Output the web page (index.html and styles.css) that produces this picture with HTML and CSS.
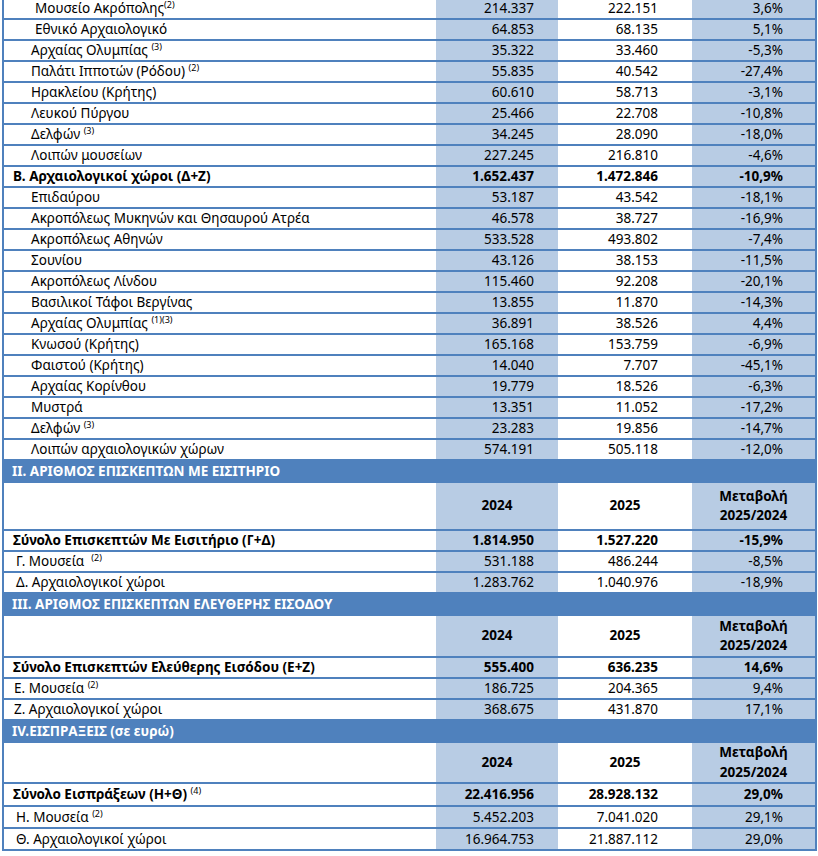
FILE: index.html
```html
<!DOCTYPE html>
<html lang="el">
<head>
<meta charset="utf-8">
<title>Επισκέπτες</title>
<link rel="stylesheet" href="styles.css">
</head>
<body>
<table class="tbl">
<colgroup><col class="c1"><col class="c2"><col class="c3"><col class="c4"></colgroup>
<tbody>
<tr><td class="lbl ind2">Μουσείο Ακρόπολης<sup>(2)</sup></td><td class="n2">214.337</td><td class="n3">222.151</td><td class="n4">3,6%</td></tr>
<tr><td class="lbl ind2">Εθνικό Αρχαιολογικό</td><td class="n2">64.853</td><td class="n3">68.135</td><td class="n4">5,1%</td></tr>
<tr><td class="lbl ind">Αρχαίας Ολυμπίας <sup>(3)</sup></td><td class="n2">35.322</td><td class="n3">33.460</td><td class="n4">-5,3%</td></tr>
<tr><td class="lbl ind">Παλάτι Ιπποτών (Ρόδου) <sup>(2)</sup></td><td class="n2">55.835</td><td class="n3">40.542</td><td class="n4">-27,4%</td></tr>
<tr><td class="lbl ind">Ηρακλείου (Κρήτης)</td><td class="n2">60.610</td><td class="n3">58.713</td><td class="n4">-3,1%</td></tr>
<tr><td class="lbl ind">Λευκού Πύργου</td><td class="n2">25.466</td><td class="n3">22.708</td><td class="n4">-10,8%</td></tr>
<tr><td class="lbl ind">Δελφών <sup>(3)</sup></td><td class="n2">34.245</td><td class="n3">28.090</td><td class="n4">-18,0%</td></tr>
<tr><td class="lbl ind">Λοιπών μουσείων</td><td class="n2">227.245</td><td class="n3">216.810</td><td class="n4">-4,6%</td></tr>
<tr class="bold"><td class="lbl top">Β. Αρχαιολογικοί χώροι (Δ+Ζ)</td><td class="n2">1.652.437</td><td class="n3">1.472.846</td><td class="n4">-10,9%</td></tr>
<tr><td class="lbl ind">Επιδαύρου</td><td class="n2">53.187</td><td class="n3">43.542</td><td class="n4">-18,1%</td></tr>
<tr><td class="lbl ind">Ακροπόλεως Μυκηνών και Θησαυρού Ατρέα</td><td class="n2">46.578</td><td class="n3">38.727</td><td class="n4">-16,9%</td></tr>
<tr><td class="lbl ind">Ακροπόλεως Αθηνών</td><td class="n2">533.528</td><td class="n3">493.802</td><td class="n4">-7,4%</td></tr>
<tr><td class="lbl ind">Σουνίου</td><td class="n2">43.126</td><td class="n3">38.153</td><td class="n4">-11,5%</td></tr>
<tr><td class="lbl ind">Ακροπόλεως Λίνδου</td><td class="n2">115.460</td><td class="n3">92.208</td><td class="n4">-20,1%</td></tr>
<tr><td class="lbl ind">Βασιλικοί Τάφοι Βεργίνας</td><td class="n2">13.855</td><td class="n3">11.870</td><td class="n4">-14,3%</td></tr>
<tr><td class="lbl ind">Αρχαίας Ολυμπίας <sup>(1)(3)</sup></td><td class="n2">36.891</td><td class="n3">38.526</td><td class="n4">4,4%</td></tr>
<tr><td class="lbl ind">Κνωσού (Κρήτης)</td><td class="n2">165.168</td><td class="n3">153.759</td><td class="n4">-6,9%</td></tr>
<tr><td class="lbl ind">Φαιστού (Κρήτης)</td><td class="n2">14.040</td><td class="n3">7.707</td><td class="n4">-45,1%</td></tr>
<tr><td class="lbl ind">Αρχαίας Κορίνθου</td><td class="n2">19.779</td><td class="n3">18.526</td><td class="n4">-6,3%</td></tr>
<tr><td class="lbl ind">Μυστρά</td><td class="n2">13.351</td><td class="n3">11.052</td><td class="n4">-17,2%</td></tr>
<tr><td class="lbl ind">Δελφών <sup>(3)</sup></td><td class="n2">23.283</td><td class="n3">19.856</td><td class="n4">-14,7%</td></tr>
<tr><td class="lbl ind">Λοιπών αρχαιολογικών χώρων</td><td class="n2">574.191</td><td class="n3">505.118</td><td class="n4">-12,0%</td></tr>

<tr class="band"><td colspan="4">II. ΑΡΙΘΜΟΣ ΕΠΙΣΚΕΠΤΩΝ ΜΕ ΕΙΣΙΤΗΡΙΟ</td></tr>
<tr class="head h2"><td></td><td class="s">2024</td><td>2025</td><td class="s">Μεταβολή<br>2025/2024</td></tr>
<tr class="bold"><td class="lbl top">Σύνολο Επισκεπτών Με Εισιτήριο (Γ+Δ)</td><td class="n2">1.814.950</td><td class="n3">1.527.220</td><td class="n4">-15,9%</td></tr>
<tr><td class="lbl sub">Γ. Μουσεία &nbsp;<sup>(2)</sup></td><td class="n2">531.188</td><td class="n3">486.244</td><td class="n4">-8,5%</td></tr>
<tr><td class="lbl sub">Δ. Αρχαιολογικοί χώροι</td><td class="n2">1.283.762</td><td class="n3">1.040.976</td><td class="n4">-18,9%</td></tr>

<tr class="band"><td colspan="4">III. ΑΡΙΘΜΟΣ ΕΠΙΣΚΕΠΤΩΝ ΕΛΕΥΘΕΡΗΣ ΕΙΣΟΔΟΥ</td></tr>
<tr class="head h3"><td></td><td class="s">2024</td><td>2025</td><td class="s">Μεταβολή<br>2025/2024</td></tr>
<tr class="bold"><td class="lbl top">Σύνολο Επισκεπτών Ελεύθερης Εισόδου (Ε+Ζ)</td><td class="n2">555.400</td><td class="n3">636.235</td><td class="n4">14,6%</td></tr>
<tr><td class="lbl sub2">Ε. Μουσεία <sup>(2)</sup></td><td class="n2">186.725</td><td class="n3">204.365</td><td class="n4">9,4%</td></tr>
<tr><td class="lbl sub2">Ζ. Αρχαιολογικοί χώροι</td><td class="n2">368.675</td><td class="n3">431.870</td><td class="n4">17,1%</td></tr>

<tr class="band"><td colspan="4">IV.ΕΙΣΠΡΑΞΕΙΣ (σε ευρώ)</td></tr>
<tr class="head h4"><td></td><td class="s">2024</td><td>2025</td><td class="s">Μεταβολή<br>2025/2024</td></tr>
<tr class="bold tall"><td class="lbl top">Σύνολο Εισπράξεων (Η+Θ) <sup>(4)</sup></td><td class="n2">22.416.956</td><td class="n3">28.928.132</td><td class="n4">29,0%</td></tr>
<tr class="mid"><td class="lbl sub">Η. Μουσεία <sup>(2)</sup></td><td class="n2">5.452.203</td><td class="n3">7.041.020</td><td class="n4">29,1%</td></tr>
<tr class="mid"><td class="lbl sub">Θ. Αρχαιολογικοί χώροι</td><td class="n2">16.964.753</td><td class="n3">21.887.112</td><td class="n4">29,0%</td></tr>
</tbody>
</table>
</body>
</html>
```
FILE: styles.css
```css
html, body {
  margin: 0;
  padding: 0;
  background: #ffffff;
}
body {
  font-family: "Noto Sans", "Open Sans", sans-serif;
  font-size: 13.5px;
  color: #000000;
}
.tbl {
  margin: -1px 0 0 2px;
  width: 815px;
  table-layout: fixed;
  border-collapse: separate;
  border-spacing: 0;
  border-left: 2px solid #4f81bd;
  border-right: 2px solid #4f81bd;
}
.c1 { width: 432px; }
.c2 { width: 122px; }
.c3 { width: 134px; }
.c4 { width: 123px; }

.tbl td {
  padding: 0;
  height: 19px;
  line-height: 19px;
  border-bottom: 2px solid #4f81bd;
  white-space: nowrap;
  overflow: hidden;
  vertical-align: middle;
  box-sizing: content-box;
}
.tbl td:nth-child(2),
.tbl td:nth-child(4) {
  background: #b8cce4;
}
.lbl { text-align: left; }
.ind { padding-left: 27px !important; }
.ind2 { padding-left: 31px !important; }
.top { padding-left: 9px !important; }
.sub { padding-left: 12px !important; }
.sub2 { padding-left: 10px !important; }

.n2 { text-align: right; padding-right: 24px !important; }
.n3 { text-align: right; padding-right: 34px !important; }
.n4 { text-align: right; padding-right: 32px !important; }

.bold td { font-weight: 700; }

sup {
  font-size: 9px;
  line-height: 0;
  vertical-align: 5px;
  font-weight: 400;
}
.bold sup { font-weight: 400; }

.band td {
  background: #4f81bd !important;
  color: #ffffff;
  font-weight: 700;
  height: 20px;
  line-height: 20px;
  padding-left: 8px;
}

.head td {
  text-align: center;
  font-weight: 700;
  line-height: 19.5px;
}
.h2 td { height: 46px; }
.h3 td { height: 40px; }
.h4 td { height: 39px; }
.tall td { height: 21px; }
.mid td { height: 20px; }
```
